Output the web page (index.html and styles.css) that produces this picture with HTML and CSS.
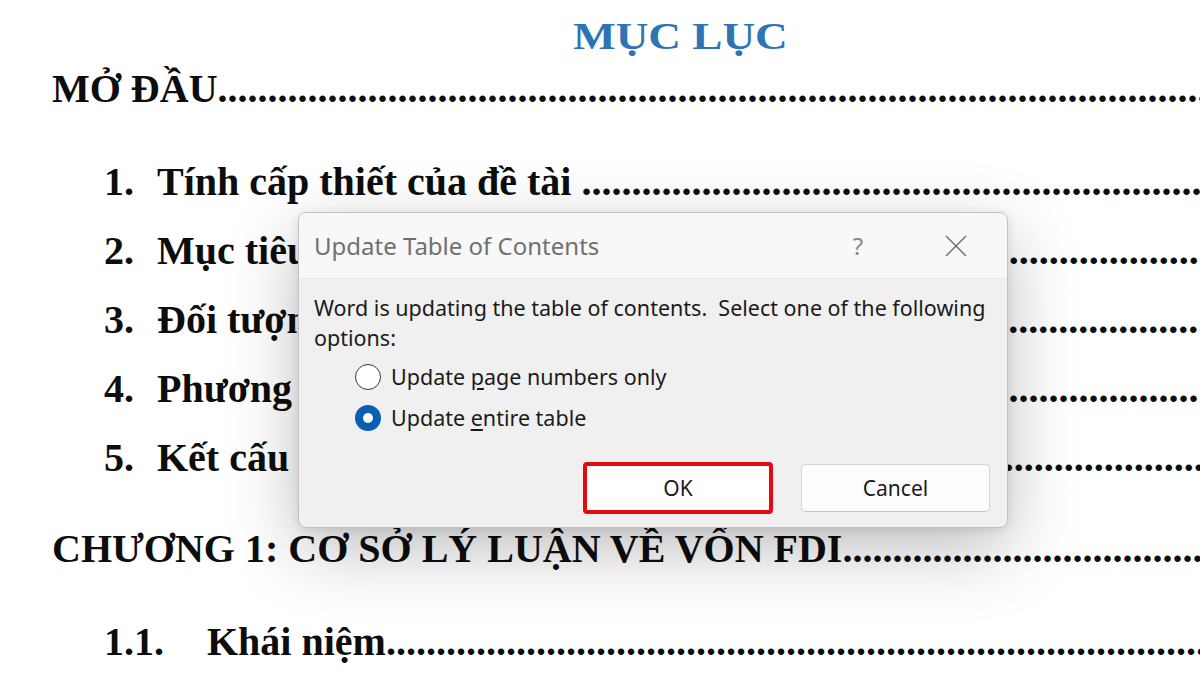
FILE: index.html
```html
<!DOCTYPE html>
<html lang="vi">
<head>
<meta charset="utf-8">
<title>Mục lục</title>
<link rel="stylesheet" href="styles.css">
</head>
<body>
<div class="page">
  <div class="doc">
    <h1 class="toc-head"><span>MỤC LỤC</span></h1>
    <div class="row lvl0"><span class="label">MỞ ĐẦU</span><span class="dots">........................................................................................................................................</span></div>
    <div class="row item first"><span class="num">1.</span><span class="label">Tính cấp thiết của đề tài&nbsp;</span><span class="dots">........................................................................................................................................</span></div>
    <div class="row item"><span class="num">2.</span><span class="label">Mục tiêu nghiên cứu</span><span class="dots">........................................................................................................................................</span></div>
    <div class="row item"><span class="num">3.</span><span class="label">Đối tượng nghiên cứu</span><span class="dots">........................................................................................................................................</span></div>
    <div class="row item"><span class="num">4.</span><span class="label">Phương pháp nghiên cứu</span><span class="dots">........................................................................................................................................</span></div>
    <div class="row item"><span class="num">5.</span><span class="label">Kết cấu đề tài</span><span class="dots">........................................................................................................................................</span></div>
    <div class="row lvl0 chap"><span class="label">CHƯƠNG 1: CƠ SỞ LÝ LUẬN VỀ VỐN FDI</span><span class="dots">........................................................................................................................................</span></div>
    <div class="row item sub"><span class="num">1.1.</span><span class="label">Khái niệm</span><span class="dots">........................................................................................................................................</span></div>
  </div>

  <div class="dialog">
    <div class="titlebar">
      <span class="title">Update Table of Contents</span>
      <span class="help">?</span>
      <span class="close">
        <svg width="22" height="22" viewBox="0 0 22 22"><path d="M1 1 L21 21 M21 1 L1 21" stroke="#6a6a6a" stroke-width="1.4" fill="none"/></svg>
      </span>
    </div>
    <div class="body">
      <p class="msg">Word is updating the table of contents.&nbsp; Select one of the following<br>options:</p>
      <div class="radios">
        <div class="radio"><span class="dot off"></span><span class="rlabel">Update <span class="ak">p</span>age numbers only</span></div>
        <div class="radio"><span class="dot on"></span><span class="rlabel">Update <span class="ak">e</span>ntire table</span></div>
      </div>
      <div class="actions">
        <button class="btn ok">OK</button>
        <button class="btn cancel">Cancel</button>
      </div>
    </div>
  </div>
</div>
</body>
</html>
```

FILE: styles.css
```css
html, body {
  margin: 0;
  padding: 0;
  background: #ffffff;
}

.page {
  position: relative;
  width: 1200px;
  height: 675px;
  overflow: hidden;
  background: #ffffff;
}

.doc {
  padding: 14px 0 0 52px;
  font-family: "Liberation Serif", "Times New Roman", serif;
  font-weight: bold;
  color: #0d0d0d;
}

.toc-head {
  margin: 0;
  padding-left: 521px;
  height: 40px;
  line-height: 44px;
  font-size: 38px;
  font-weight: bold;
  color: #2e74b5;
}

.toc-head span {
  display: inline-block;
  transform: scaleX(1.19);
  transform-origin: 0 50%;
}

.row {
  display: flex;
  height: 69px;
  line-height: 69px;
  font-size: 40px;
  white-space: nowrap;
}

.label {
  flex: none;
}

.dots {
  flex: 1;
  min-width: 0;
  overflow: hidden;
}

.item {
  padding-left: 52px;
}

.item.first {
  margin-top: 24px;
}

.num {
  flex: none;
  width: 53px;
}

.chap {
  margin-top: 22px;
}

.sub {
  margin-top: 24px;
}

.sub .num {
  width: 103px;
}

/* Dialog */
.dialog {
  position: absolute;
  left: 298px;
  top: 212px;
  width: 710px;
  height: 316px;
  box-sizing: border-box;
  border: 1px solid #c2c2c2;
  border-radius: 8px;
  background: #f0f0f0;
  overflow: hidden;
  display: flex;
  flex-direction: column;
  font-family: "Noto Sans", "Open Sans", sans-serif;
  box-shadow: 0 22px 70px rgba(0, 0, 0, 0.26), 0 2px 10px rgba(0, 0, 0, 0.1);
}

.titlebar {
  flex: none;
  height: 65px;
  display: flex;
  align-items: center;
  padding-left: 15px;
  background: #f8f8f8;
  border-bottom: 1px solid #e6e6e6;
}

.title {
  flex: 1;
  font-size: 24px;
  color: #707070;
}

.help {
  width: 24px;
  margin-right: 75px;
  text-align: center;
  font-size: 24px;
  color: #8a8a8a;
}

.close {
  width: 22px;
  height: 22px;
  margin-right: 40px;
  display: flex;
}

.body {
  flex: 1;
  display: flex;
  flex-direction: column;
  padding: 14px 15px 0;
}

.msg {
  margin: 0;
  font-size: 21.5px;
  line-height: 30px;
  color: #1b1b1b;
  white-space: nowrap;
}

.radios {
  margin: 3px 0 0 41px;
}

.radio {
  display: flex;
  align-items: center;
  height: 41px;
}

.dot {
  flex: none;
  box-sizing: border-box;
  width: 26px;
  height: 26px;
  border-radius: 50%;
  margin-right: 10px;
}

.dot.off {
  border: 1.5px solid #3a3a3a;
  background: #ffffff;
}

.dot.on {
  background: #0a5fb4;
  display: flex;
  align-items: center;
  justify-content: center;
}

.dot.on::after {
  content: "";
  width: 10px;
  height: 10px;
  border-radius: 50%;
  background: #ffffff;
}

.rlabel {
  font-size: 21.5px;
  color: #1b1b1b;
}

.ak {
  text-decoration: underline;
  text-underline-offset: 3px;
}

.actions {
  margin-top: auto;
  display: flex;
  justify-content: flex-end;
  align-items: center;
  gap: 28px;
  padding: 0 2px 13px 0;
}

.btn {
  font-family: "Noto Sans", "Open Sans", sans-serif;
  font-size: 21px;
  color: #1b1b1b;
  background: #ffffff;
  box-sizing: border-box;
  padding: 0;
}

.ok {
  width: 190px;
  height: 52px;
  border: 4px solid #e60a10;
  border-radius: 4px;
}

.cancel {
  width: 189px;
  height: 48px;
  border: 1px solid #d6d6d6;
  border-bottom-color: #c4c4c4;
  border-radius: 5px;
  background: #fdfdfd;
}
```
